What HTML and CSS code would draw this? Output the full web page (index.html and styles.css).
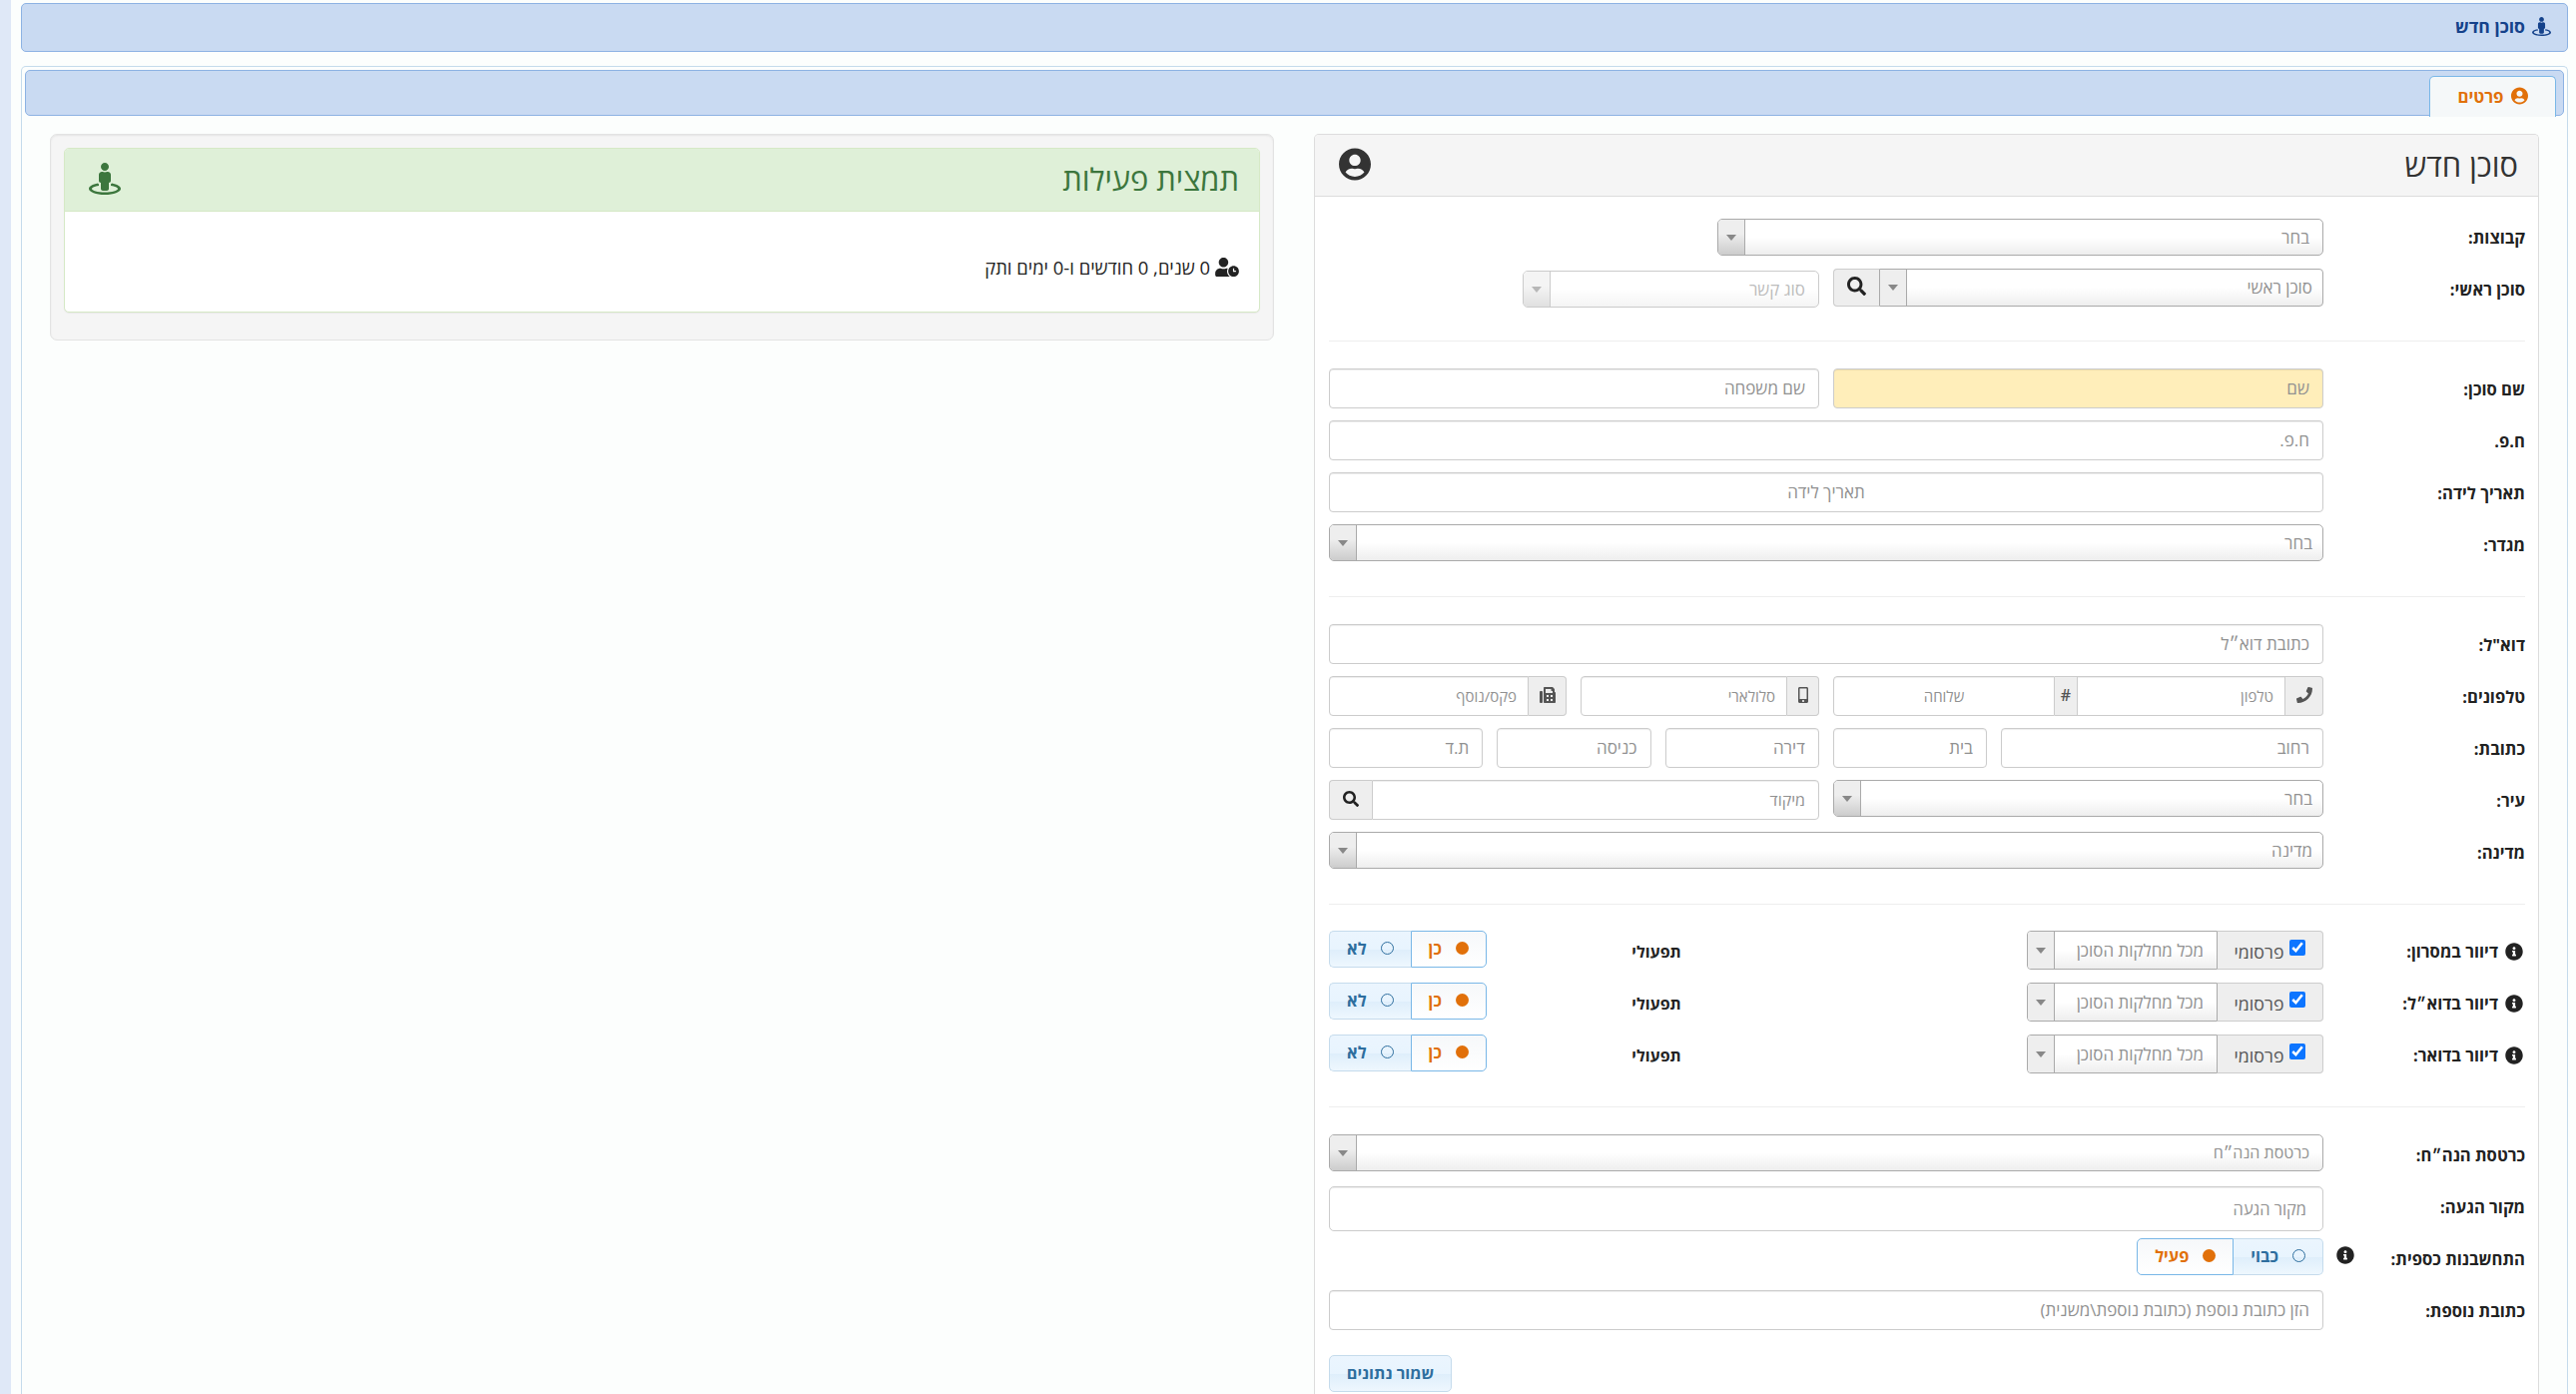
FILE: index.html
```
<!DOCTYPE html>
<html lang="he" dir="rtl">
<head>
    <meta charset="UTF-8">
    <meta name="viewport" content="width=device-width, initial-scale=1.0">
    <title>סוכן חדש</title>
    <link rel="stylesheet" href="styles.css">
</head>
<body>
    <!-- Icon sprite -->
    <svg class="sprite" xmlns="http://www.w3.org/2000/svg">
        <symbol id="i-user" viewBox="0 0 496 512"><path d="M248 8C111 8 0 119 0 256s111 248 248 248 248-111 248-248S385 8 248 8zm0 96c48.6 0 88 39.4 88 88s-39.4 88-88 88-88-39.4-88-88 39.4-88 88-88zm0 344c-58.7 0-111.3-26.6-146.5-68.2 18.8-35.4 55.6-59.8 98.5-59.8 2.4 0 4.8.4 7.1 1.1 13 4.2 26.6 6.9 40.9 6.9 14.3 0 28-2.7 40.9-6.9 2.3-.7 4.7-1.1 7.1-1.1 42.9 0 79.7 24.4 98.5 59.8C359.3 421.4 306.7 448 248 448z"/></symbol>
        <symbol id="i-street" viewBox="0 0 512 512"><path d="M367.9 329.76c-4.62 5.3-9.78 10.1-15.9 13.65v22.94c66.52 9.34 112 28.05 112 49.65 0 30.93-93.12 56-208 56S48 446.93 48 416c0-21.6 45.48-40.3 112-49.65v-22.94c-6.12-3.55-11.28-8.35-15.9-13.65C58.87 345.34 0 378.05 0 416c0 53.02 114.62 96 256 96s256-42.98 256-96c0-37.95-58.87-70.66-144.1-86.24zM256 128c35.35 0 64-28.65 64-64S291.35 0 256 0s-64 28.65-64 64 28.65 64 64 64zm-64 192v96c0 17.67 14.33 32 32 32h64c17.67 0 32-14.33 32-32v-96c17.67 0 32-14.33 32-32v-96c0-26.51-21.49-48-48-48h-11.8c-11.07 5.03-23.26 8-36.2 8s-25.13-2.97-36.2-8H208c-26.51 0-48 21.49-48 48v96c0 17.67 14.33 32 32 32z"/></symbol>
        <symbol id="i-info" viewBox="0 0 512 512"><path d="M256 8C119.043 8 8 119.083 8 256c0 136.997 111.043 248 248 248s248-111.003 248-248C504 119.083 392.957 8 256 8zm0 110c23.196 0 42 18.804 42 42s-18.804 42-42 42-42-18.804-42-42 18.804-42 42-42zm56 254c0 6.627-5.373 12-12 12h-88c-6.627 0-12-5.373-12-12v-24c0-6.627 5.373-12 12-12h12v-64h-12c-6.627 0-12-5.373-12-12v-24c0-6.627 5.373-12 12-12h64c6.627 0 12 5.373 12 12v100h12c6.627 0 12 5.373 12 12v24z"/></symbol>
        <symbol id="i-search" viewBox="0 0 512 512"><path d="M505 442.7L405.3 343c-4.5-4.5-10.6-7-17-7H372c27.6-35.3 44-79.7 44-128C416 93.1 322.9 0 208 0S0 93.1 0 208s93.1 208 208 208c48.3 0 92.7-16.4 128-44v16.3c0 6.4 2.5 12.5 7 17l99.7 99.7c9.4 9.4 24.6 9.4 33.9 0l28.3-28.3c9.4-9.4 9.4-24.6.1-34zM208 336c-70.7 0-128-57.2-128-128 0-70.7 57.2-128 128-128 70.7 0 128 57.2 128 128 0 70.7-57.2 128-128 128z"/></symbol>
        <symbol id="i-phone" viewBox="0 0 512 512"><path d="M493.4 24.6l-104-24c-11.3-2.6-22.9 3.3-27.5 13.9l-48 112c-4.2 9.8-1.4 21.3 6.9 28l60.6 49.6c-36 76.7-98.9 140.5-177.2 177.2l-49.6-60.6c-6.8-8.3-18.2-11.1-28-6.9l-112 48C3.9 366.5-2 378.1.6 389.4l24 104C27.1 504.2 36.7 512 48 512c256.1 0 464-207.5 464-464 0-11.2-7.7-20.9-18.6-23.4z"/></symbol>
        <symbol id="i-mobile" viewBox="0 0 320 512"><path d="M272 0H48C21.5 0 0 21.5 0 48v416c0 26.5 21.5 48 48 48h224c26.5 0 48-21.5 48-48V48c0-26.5-21.5-48-48-48zM160 480c-17.7 0-32-14.3-32-32s14.3-32 32-32 32 14.3 32 32-14.3 32-32 32zm112-108c0 6.6-5.4 12-12 12H60c-6.6 0-12-5.4-12-12V60c0-6.6 5.4-12 12-12h200c6.6 0 12 5.4 12 12v312z"/></symbol>
        <symbol id="i-fax" viewBox="0 0 512 512"><rect x="0" y="128" width="96" height="384" rx="32"/><path fill-rule="evenodd" d="M480 160V77.300c0-8.500-3.400-16.600-9.400-22.600L425.400 9.400c-6-6-14.100-9.400-22.600-9.400H160c-17.700 0-32 14.300-32 32v448c0 17.700 14.300 32 32 32h320c17.700 0 32-14.300 32-32V192c0-17.700-14.300-32-32-32zM224 256h64v64h-64zM352 256h64v64h-64zM224 384h64v64h-64zM352 384h64v64h-64zM192 64h176v48c0 8.800 7.200 16 16 16h32v64H192z"/></symbol>
        <symbol id="i-clock" viewBox="0 0 640 512"><path d="M496 224c-79.6 0-144 64.4-144 144s64.4 144 144 144 144-64.4 144-144-64.4-144-144-144zm64 150.3c0 5.3-4.4 9.7-9.7 9.7h-60.6c-5.3 0-9.7-4.4-9.7-9.7v-76.6c0-5.3 4.4-9.7 9.7-9.7h12.6c5.3 0 9.7 4.4 9.7 9.7V352h38.3c5.3 0 9.7 4.4 9.7 9.7v12.6zM320 368c0-27.8 6.7-54.1 18.2-77.5-8-1.5-16.2-2.5-24.6-2.5h-16.7c-22.2 10.2-46.9 16-72.9 16s-50.6-5.8-72.9-16h-16.7C60.2 288 0 348.2 0 422.4V464c0 26.5 21.5 48 48 48h347.1c-45.3-31.9-75.1-84.5-75.1-144zm-96-112c70.7 0 128-57.3 128-128S294.7 0 224 0 96 57.3 96 128s57.3 128 128 128z"/></symbol>
    </svg>

    <div class="page">
        <div class="title-bar">
            <svg class="icon icon-title"><use href="#i-street"/></svg>
            <span>סוכן חדש</span>
        </div>

        <div class="tabs">
            <div class="tabs-nav">
                <a class="tab">
                    <svg class="icon icon-tab"><use href="#i-user"/></svg>
                    <span>פרטים</span>
                </a>
            </div>

            <div class="columns">
                <div class="panel">
                    <div class="panel-heading">
                        <h2>סוכן חדש</h2>
                        <svg class="icon icon-heading"><use href="#i-user"/></svg>
                    </div>
                    <form class="panel-body">
                        <div class="row">
                            <label>קבוצות:</label>
                            <div class="fields">
                                <div class="select groups"><span>בחר</span><i></i></div>
                            </div>
                        </div>
                        <div class="row">
                            <label>סוכן ראשי:</label>
                            <div class="fields">
                                <div class="group half">
                                    <div class="select in-group end"><span>סוכן ראשי</span><i></i></div>
                                    <button type="button" class="addon search-main"><svg class="icon icon-search"><use href="#i-search"/></svg></button>
                                </div>
                                <div class="select relation disabled"><span>סוג קשר</span><i></i></div>
                            </div>
                        </div>

                        <hr>

                        <div class="row">
                            <label>שם סוכן:</label>
                            <div class="fields">
                                <input class="half required" type="text" placeholder="שם">
                                <input class="half" type="text" placeholder="שם משפחה">
                            </div>
                        </div>
                        <div class="row">
                            <label>ח.פ.</label>
                            <div class="fields"><input type="text" placeholder="ח.פ."></div>
                        </div>
                        <div class="row">
                            <label>תאריך לידה:</label>
                            <div class="fields"><input class="center" type="text" placeholder="תאריך לידה"></div>
                        </div>
                        <div class="row">
                            <label>מגדר:</label>
                            <div class="fields"><div class="select near"><span>בחר</span><i></i></div></div>
                        </div>

                        <hr>

                        <div class="row">
                            <label>דוא"ל:</label>
                            <div class="fields"><input type="text" placeholder="כתובת דוא״ל"></div>
                        </div>
                        <div class="row">
                            <label>טלפונים:</label>
                            <div class="fields">
                                <div class="group half small">
                                    <span class="addon addon-phone"><svg class="icon icon-sm"><use href="#i-phone"/></svg></span>
                                    <input class="phone" type="text" placeholder="טלפון">
                                    <span class="addon addon-hash">#</span>
                                    <input class="center" type="text" placeholder="שלוחה">
                                </div>
                                <div class="group mobile small">
                                    <span class="addon addon-mobile"><svg class="icon icon-mobile"><use href="#i-mobile"/></svg></span>
                                    <input type="text" placeholder="סלולארי">
                                </div>
                                <div class="group fax small">
                                    <span class="addon addon-phone"><svg class="icon icon-sm"><use href="#i-fax"/></svg></span>
                                    <input type="text" placeholder="פקס/נוסף">
                                </div>
                            </div>
                        </div>
                        <div class="row">
                            <label>כתובת:</label>
                            <div class="fields">
                                <input class="street" type="text" placeholder="רחוב">
                                <input class="sixth" type="text" placeholder="בית">
                                <input class="sixth" type="text" placeholder="דירה">
                                <input class="sixth" type="text" placeholder="כניסה">
                                <input class="sixth" type="text" placeholder="ת.ד">
                            </div>
                        </div>
                        <div class="row">
                            <label>עיר:</label>
                            <div class="fields">
                                <div class="select half near"><span>בחר</span><i></i></div>
                                <div class="group half">
                                    <input class="zip" type="text" placeholder="מיקוד">
                                    <button type="button" class="addon addon-zip"><svg class="icon icon-sm"><use href="#i-search"/></svg></button>
                                </div>
                            </div>
                        </div>
                        <div class="row">
                            <label>מדינה:</label>
                            <div class="fields"><div class="select near"><span>מדינה</span><i></i></div></div>
                        </div>

                        <hr class="tight">

                        <div class="row">
                            <label class="with-info"><svg class="icon icon-info"><use href="#i-info"/></svg>דיוור במסרון:</label>
                            <div class="fields">
                                <div class="group mailing">
                                    <span class="addon addon-check"><input type="checkbox" checked><span>פרסומי</span></span>
                                    <div class="select in-group"><span>מכל מחלקות הסוכן</span><i></i></div>
                                </div>
                                <label class="operational">תפעולי</label>
                                <div class="toggle">
                                    <span class="option active"><b></b>כן</span>
                                    <span class="option"><b></b>לא</span>
                                </div>
                            </div>
                        </div>
                        <div class="row">
                            <label class="with-info"><svg class="icon icon-info"><use href="#i-info"/></svg>דיוור בדוא״ל:</label>
                            <div class="fields">
                                <div class="group mailing">
                                    <span class="addon addon-check"><input type="checkbox" checked><span>פרסומי</span></span>
                                    <div class="select in-group"><span>מכל מחלקות הסוכן</span><i></i></div>
                                </div>
                                <label class="operational">תפעולי</label>
                                <div class="toggle">
                                    <span class="option active"><b></b>כן</span>
                                    <span class="option"><b></b>לא</span>
                                </div>
                            </div>
                        </div>
                        <div class="row">
                            <label class="with-info"><svg class="icon icon-info"><use href="#i-info"/></svg>דיוור בדואר:</label>
                            <div class="fields">
                                <div class="group mailing">
                                    <span class="addon addon-check"><input type="checkbox" checked><span>פרסומי</span></span>
                                    <div class="select in-group"><span>מכל מחלקות הסוכן</span><i></i></div>
                                </div>
                                <label class="operational">תפעולי</label>
                                <div class="toggle">
                                    <span class="option active"><b></b>כן</span>
                                    <span class="option"><b></b>לא</span>
                                </div>
                            </div>
                        </div>

                        <hr>

                        <div class="row">
                            <label>כרטסת הנה״ח:</label>
                            <div class="fields"><div class="select ledger"><span>כרטסת הנה״ח</span><i></i></div></div>
                        </div>
                        <div class="row">
                            <label>מקור הגעה:</label>
                            <div class="fields"><input class="tall" type="text" placeholder="מקור הגעה"></div>
                        </div>
                        <div class="row">
                            <label class="wide">התחשבנות כספית:</label>
                            <svg class="icon icon-info icon-balance"><use href="#i-info"/></svg>
                            <div class="fields">
                                <div class="toggle">
                                    <span class="option"><b></b>כבוי</span>
                                    <span class="option active"><b></b>פעיל</span>
                                </div>
                            </div>
                        </div>
                        <div class="row">
                            <label>כתובת נוספת:</label>
                            <div class="fields"><input type="text" placeholder="הזן כתובת נוספת (כתובת נוספת\משנית)"></div>
                        </div>
                        <div class="actions">
                            <button type="button" class="save">שמור נתונים</button>
                        </div>
                    </form>
                </div>

                <div class="well">
                    <div class="summary">
                        <div class="summary-heading">
                            <h2>תמצית פעילות</h2>
                            <svg class="icon icon-summary"><use href="#i-street"/></svg>
                        </div>
                        <div class="summary-body">
                            <svg class="icon icon-clock"><use href="#i-clock"/></svg>
                            <span>0 שנים, 0 חודשים ו-0 ימים ותק</span>
                        </div>
                    </div>
                </div>
            </div>
        </div>
    </div>
</body>
</html>
```
FILE: styles.css
```
* {
    box-sizing: border-box;
}
body {
    margin: 0;
    font-family: "Open Sans", "Noto Sans", sans-serif;
    font-size: 16px;
    color: #222;
    background-color: #fcfefd;
    border-left: 11px solid #dfe8f7;
}
h2 {
    margin: 0;
    font-size: 30.8px;
    font-weight: 500;
    line-height: 33px;
}
.sprite {
    display: none;
}
.icon {
    display: block;
    flex: none;
    fill: currentColor;
}
.page {
    display: flex;
    flex-direction: column;
    height: 100vh;
    padding: 3px 8px 0 10px;
    overflow: hidden;
}
.title-bar {
    display: flex;
    flex: none;
    align-items: center;
    gap: 7px;
    height: 49px;
    padding: 0 16px 3px;
    border: 1px solid #8db2e3;
    border-radius: 5px;
    background-color: #c9daf2;
    color: #15428b;
    font-size: 17.6px;
    font-weight: bold;
}
.icon-title {
    width: 19px;
    height: 19px;
}

/* Tabs */
.tabs {
    flex: 1;
    min-height: 0;
    margin-top: 14px;
    padding: 3px 3px 0;
    border: 1px solid #c5dbec;
    border-bottom: 0;
    border-radius: 5px 5px 0 0;
}
.tabs-nav {
    height: 46px;
    padding: 5px 7px 0;
    border: 1px solid #8db2e3;
    border-radius: 5px;
    background-color: #c9daf2;
}
.tab {
    display: flex;
    justify-content: center;
    align-items: center;
    gap: 7px;
    width: 127px;
    height: 41px;
    padding: 0 0 2px 4px;
    border: 1px solid #79b7e7;
    border-bottom: 0;
    border-radius: 5px 5px 0 0;
    background-color: #f5f8f9;
    color: #e17009;
    font-size: 16.8px;
    font-weight: bold;
}
.tab .icon {
    margin-right: 4px;
}
.icon-tab {
    width: 17px;
    height: 18px;
}
.columns {
    display: flex;
    justify-content: space-between;
    align-items: flex-start;
    height: calc(100% - 46px);
    padding: 18px 25px 0;
}

/* Details form */
.panel {
    width: 1227px;
    height: 100%;
    border: 1px solid #ddd;
    border-bottom: 0;
    border-radius: 5px 5px 0 0;
    background-color: #fff;
}
.panel-heading {
    display: flex;
    justify-content: space-between;
    align-items: center;
    height: 62px;
    padding: 0 20px 0 24px;
    border-bottom: 1px solid #ddd;
    border-radius: 4px 4px 0 0;
    background-color: #f5f5f5;
    color: #333;
}
.icon-heading {
    width: 32px;
    height: 33px;
    margin-bottom: 3px;
}
.panel-body {
    padding: 20px 13px 0 14px;
}
.row {
    display: flex;
    height: 52px;
}
.row:first-child .fields {
    padding-top: 2px;
}
.row > label {
    width: 202px;
    padding-top: 10px;
    font-size: 16.6px;
    font-weight: bold;
    line-height: 22px;
}
.row > label.with-info {
    display: flex;
    align-items: center;
    gap: 7px;
    height: 32px;
    padding-right: 2px;
}
.row > label.wide {
    width: 171px;
}
.icon-info {
    width: 18px;
    height: 18px;
}
.icon-balance {
    margin: 8px 0 0 13px;
}
.fields {
    flex: 1;
    display: flex;
    align-items: flex-start;
    gap: 14px;
    min-width: 0;
}
hr {
    height: 1px;
    margin: 20px 0 27px;
    border: 0;
    background-color: #eee;
}
hr.tight {
    margin-bottom: 26px;
}
input[type="text"] {
    flex: 1;
    min-width: 0;
    height: 40px;
    padding: 0 13px 1px;
    border: 1px solid #ccc;
    border-radius: 4px;
    background-color: #fff;
    box-shadow: inset 0 1px 1px rgba(0, 0, 0, .075);
    font-family: inherit;
    font-size: 17px;
}
input::placeholder {
    color: #919191;
    opacity: 1;
}
input.required {
    background-color: #ffeeba;
}
input.center {
    text-align: center;
}
input.tall {
    height: 45px;
    padding: 0 16px 1px;
    border-radius: 5px;
    font-size: 16.4px;
}
.fields > .half,
.fields > input.half {
    flex: none;
    width: 491px;
}
.fields > input.street {
    flex: none;
    width: 323px;
}
.fields > input.sixth {
    flex: 1;
}

/* Dropdowns */
.select {
    display: flex;
    flex: 1;
    height: 37px;
    border: 1px solid #aaa;
    border-radius: 5px;
    background: linear-gradient(to top, #eee 0%, #fff 50%);
    color: #919191;
    font-size: 16.9px;
    overflow: hidden;
}
.select span {
    flex: 1;
    padding: 0 13px;
    line-height: 35px;
    white-space: nowrap;
}
.select.near span,
.select.end span {
    padding: 0 10px;
}
.select i {
    display: flex;
    justify-content: center;
    align-items: center;
    width: 27px;
    border-right: 1px solid #aaa;
    background: linear-gradient(to top, #ccc 0%, #eee 60%);
}
.select i::before {
    content: "";
    border: 5px solid transparent;
    border-top: 6px solid #888;
    border-bottom: 0;
}
.select.groups {
    flex: none;
    width: 607px;
}
.select.relation {
    flex: none;
    width: 297px;
    margin-top: 2px;
    opacity: .6;
}
.select.ledger {
    font-size: 16px;
}

/* Input groups */
.group {
    display: flex;
    align-items: stretch;
}
.group input[type="text"] {
    border-radius: 0;
}
.group.small input[type="text"] {
    font-size: 15px;
    padding: 0 11px 1px;
}
.group input.zip {
    font-size: 16px;
}
.group > :first-child,
.group > input[type="text"]:first-child {
    border-radius: 0 4px 4px 0;
}
.group > :last-child,
.group > input[type="text"]:last-child {
    border-radius: 4px 0 0 4px;
}
.select.in-group {
    height: 38px;
}
.select.in-group i {
    background: #eee;
}
.addon {
    display: flex;
    flex: none;
    justify-content: center;
    align-items: center;
    padding: 0 0 2px;
    border: 1px solid #ccc;
    background-color: #eee;
    color: #555;
}
.addon:first-child {
    border-left: 0;
}
.addon:last-child {
    border-right: 0;
}
button.addon {
    color: #222;
}
.search-main {
    width: 46px;
    padding-bottom: 4px;
}
.icon-search {
    width: 19px;
    height: 19px;
}
.icon-sm {
    width: 16px;
    height: 16px;
}
.icon-mobile {
    width: 10px;
    height: 16px;
}
.addon-phone {
    width: 38px;
}
.addon-mobile {
    width: 32px;
}
.addon-hash {
    width: 22px;
    border-left: 0;
    border-right: 0;
    font-size: 16px;
    font-weight: 600;
}
.addon-zip {
    width: 43px;
    padding-bottom: 3px;
}
.group.small .phone {
    flex: none;
    width: 209px;
}
.group.mobile {
    width: 239px;
}
.group.fax {
    width: 238px;
}

/* Mailing rows */
.group.mailing {
    width: 297px;
}
.mailing .select.in-group {
    height: 39px;
}
.mailing .select span {
    line-height: 37px;
    padding: 0 13px 0 0;
}
.addon-check {
    align-items: flex-start;
    gap: 6px;
    width: 106px;
    padding: 8px 0 0;
}
.addon-check input {
    width: 16px;
    height: 16px;
    margin: 0;
    accent-color: #0d75ff;
}
.addon-check span {
    font-size: 17.8px;
    line-height: 24px;
}
.operational {
    width: 182px;
    margin-right: auto;
    padding: 10px 1px 0 0;
    font-weight: bold;
    line-height: 22px;
}
.toggle {
    display: flex;
    height: 37px;
}
.option {
    display: flex;
    align-items: center;
    gap: 14px;
    padding: 0 17px 2px;
    border: 1px solid #c5dbec;
    background: linear-gradient(to bottom, #ebf5fe 0%, #e8f4fe 50%, #deeefb 51%, #eef7fe 100%);
    color: #2e6e9e;
    font-size: 16.4px;
    font-weight: bold;
}
.option b {
    width: 13px;
    height: 13px;
    border: 1px solid #2e6e9e;
    border-radius: 50%;
}
.option.active {
    border-color: #79b7e7;
    background: linear-gradient(to bottom, #f6f8fa, #fff);
    color: #e17009;
}
.option.active b {
    border: 0;
    background-color: #e17009;
}
.option:first-child {
    border-radius: 0 5px 5px 0;
}
.option:last-child {
    border-radius: 5px 0 0 5px;
}
.option:not(.active):first-child {
    border-left: 0;
}
.option:not(.active):last-child {
    border-right: 0;
}
.actions {
    display: flex;
    justify-content: flex-end;
    padding-top: 13px;
}
.save {
    width: 123px;
    height: 37px;
    padding: 0 0 1px;
    border: 1px solid #c5dbec;
    border-radius: 5px;
    background: linear-gradient(to bottom, #ebf5fe 0%, #e8f4fe 50%, #deeefb 51%, #eef7fe 100%);
    color: #2e6e9e;
    font-family: inherit;
    font-size: 16.3px;
    font-weight: bold;
}

/* Activity summary */
.well {
    width: 1226px;
    height: 207px;
    padding: 13px;
    border: 1px solid #e3e3e3;
    border-radius: 7px;
    background-color: #f5f5f5;
    box-shadow: inset 0 1px 2px rgba(0, 0, 0, .07);
}
.summary {
    height: 165px;
    border: 1px solid #d6e9c6;
    border-radius: 5px;
    background-color: #fff;
    box-shadow: 0 1px 1px rgba(0, 0, 0, .05);
}
.summary-heading {
    display: flex;
    justify-content: space-between;
    align-items: center;
    height: 63px;
    padding: 0 20px 2px 24px;
    border-bottom: 1px solid #d6e9c6;
    border-radius: 4px 4px 0 0;
    background-color: #dff0d8;
    color: #3c763d;
}
.icon-summary {
    width: 32px;
    height: 32px;
}
.summary-body {
    display: flex;
    align-items: center;
    gap: 5px;
    padding: 43px 20px 0;
    font-size: 18.4px;
}
.icon-clock {
    width: 24px;
    height: 19px;
}
```
